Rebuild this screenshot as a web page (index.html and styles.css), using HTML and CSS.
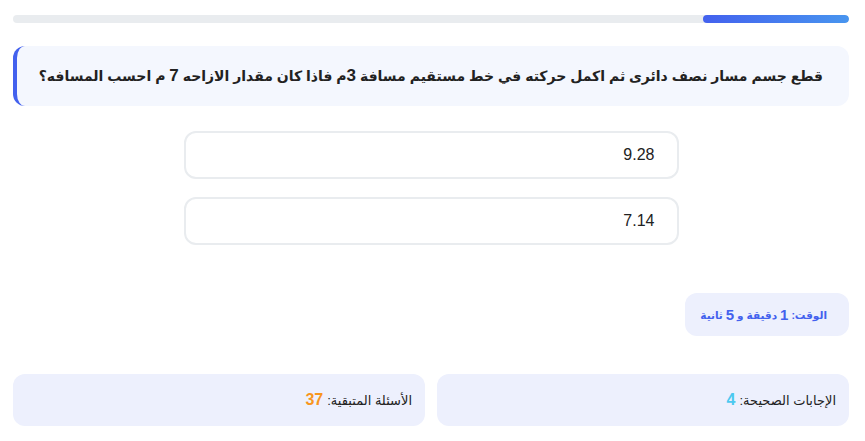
FILE: index.html
```html
<!DOCTYPE html>
<html lang="ar" dir="rtl">
  <head>
    <meta charset="UTF-8" />
    <meta name="viewport" content="width=device-width, initial-scale=1.0" />
    <title>اختبار</title>
    <link rel="stylesheet" href="styles.css">
  </head>
  <body>
    <div class="quiz">
      <div class="progress">
        <div class="progress-fill" style="width: 17.5%"></div>
      </div>
      <div class="question">
        قطع جسم مسار نصف دائرى ثم اكمل حركته في خط مستقيم مسافة <b class="num">3</b>م فاذا كان مقدار الازاحه <b class="num">7</b> م احسب المسافه؟
      </div>
      <div class="options">
        <div class="option">9.28</div>
        <div class="option">7.14</div>
      </div>
      <div class="timer-row">
        <div class="timer">الوقت: <b>1</b> دقيقة و <b>5</b> ثانية</div>
      </div>
      <div class="stats">
        <div class="stat">الإجابات الصحيحة: <b class="correct">4</b></div>
        <div class="stat">الأسئلة المتبقية: <b class="left">37</b></div>
      </div>
    </div>
  </body>
</html>
```

FILE: styles.css
```css
body {
  margin: 0;
  background: #fff;
  font-family: 'Liberation Sans', 'DejaVu Sans', sans-serif;
  color: #222;
}
.quiz {
  padding: 15px 16px 0 13px;
}
/* progress */
.progress {
  height: 8px;
  border-radius: 4px;
  background-color: #e9ecef;
  overflow: hidden;
}
.progress-fill {
  height: 100%;
  border-radius: 4px;
  background: linear-gradient(90deg, #4361ee, #4895ef);
}
/* question */
.question {
  margin-top: 23px;
  height: 60px;
  box-sizing: border-box;
  padding: 0 26px;
  line-height: 60px;
  font-size: 14px;
  font-weight: bold;
  white-space: nowrap;
  overflow: hidden;
  color: #222;
  background-color: #f4f7fe;
  border-left: 4px solid #4361ee;
  border-radius: 12px;
}
.question .num {
  font-size: 17px;
}
/* options */
.options {
  display: flex;
  flex-direction: column;
  align-items: center;
  gap: 18px;
  margin-top: 25px;
}
.option {
  width: 495px;
  height: 48px;
  box-sizing: border-box;
  padding: 0 22px;
  display: flex;
  align-items: center;
  font-size: 16px;
  color: #222;
  border: 2px solid #e9ecef;
  border-radius: 12px;
  background: #fff;
}
/* timer */
.timer-row {
  display: flex;
  margin-top: 48px;
}
.timer {
  height: 43px;
  box-sizing: border-box;
  padding: 0 22px 0 15px;
  display: flex;
  align-items: center;
  gap: 3px;
  font-size: 10.5px;
  font-weight: bold;
  color: #4361ee;
  background-color: #edf0fd;
  border-radius: 12px;
}
.timer b {
  font-size: 15px;
}
/* stats */
.stats {
  display: flex;
  gap: 12px;
  margin-top: 38px;
}
.stat {
  flex: 1;
  height: 52px;
  box-sizing: border-box;
  padding: 0 13px;
  display: flex;
  align-items: center;
  gap: 4px;
  font-size: 13px;
  color: #222;
  background-color: #edf0fd;
  border-radius: 12px;
}
.stat b {
  font-size: 16px;
}
.correct {
  color: #4cc9f0;
}
.left {
  color: #f8961e;
}
```
